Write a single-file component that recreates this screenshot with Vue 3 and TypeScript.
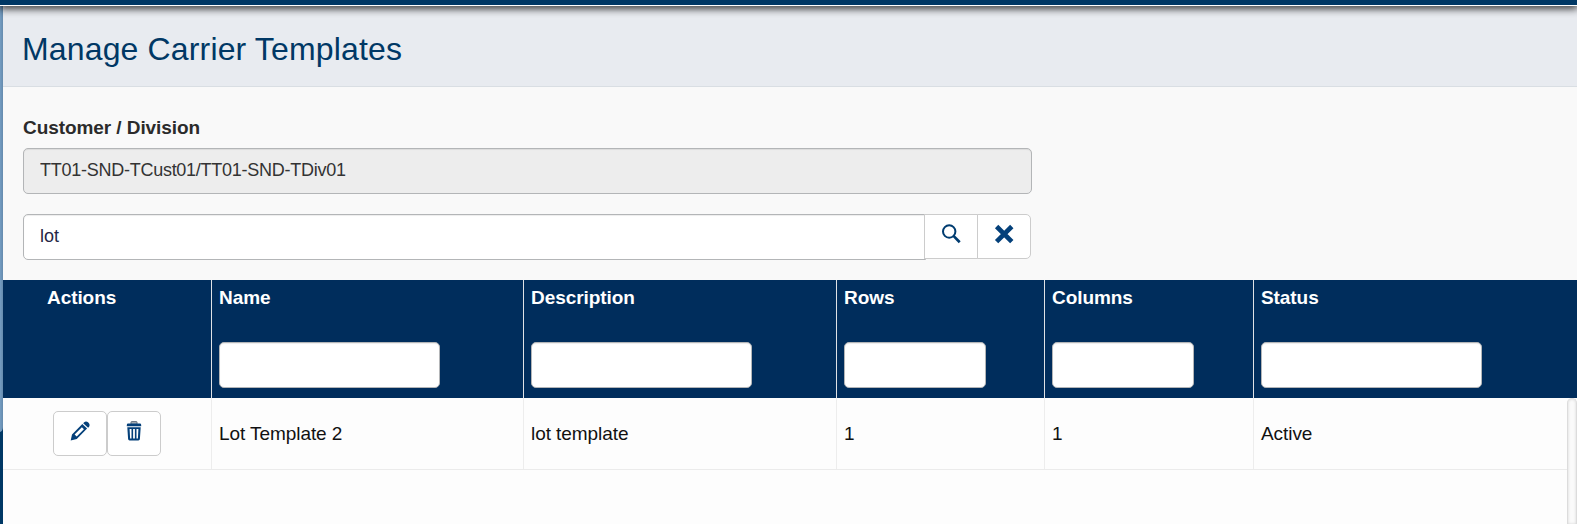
<script setup lang="ts">
import { ref } from 'vue'

interface Column {
  key: 'name' | 'description' | 'rows' | 'columns' | 'status'
  label: string
  narrow?: boolean
}

const columns: Column[] = [
  { key: 'name', label: 'Name' },
  { key: 'description', label: 'Description' },
  { key: 'rows', label: 'Rows', narrow: true },
  { key: 'columns', label: 'Columns', narrow: true },
  { key: 'status', label: 'Status' },
]

const templates = [
  { name: 'Lot Template 2', description: 'lot template', rows: 1, columns: 1, status: 'Active' },
]

const division = ref('TT01-SND-TCust01/TT01-SND-TDiv01')
const search = ref('lot')
</script>

<template>
  <div class="app">
    <div class="topbar"></div>
    <div class="body">
      <div class="rail"><div class="rail-light"></div></div>
      <main class="page">
        <header class="page-header"><h1><span>Manage Carrier Templates</span></h1></header>
        <section class="form">
          <label class="label"><span>Customer / Division</span></label>
          <input v-model="division" class="input division" disabled />
          <div class="search">
            <input v-model="search" class="input search-input" />
            <button class="btn attached" aria-label="Search">
              <svg width="20" height="20" viewBox="0 0 20 20">
                <circle cx="8.2" cy="7.5" r="6.2" fill="none" stroke="#003c70" stroke-width="2" />
                <path d="M12.5 11.9l6.2 6.3" fill="none" stroke="#003c70" stroke-width="2.7" />
              </svg>
            </button>
            <button class="btn attached last" aria-label="Clear">
              <svg width="20" height="20" viewBox="0 0 20 20">
                <path d="M2.6 2.5l15.2 15.2M17.8 2.5L2.6 17.7" stroke="#04407a" stroke-width="4.7" />
              </svg>
            </button>
          </div>
        </section>
        <section class="grid">
          <div class="row head">
            <div class="cell actions-head"><span>Actions</span></div>
            <div v-for="c in columns" :key="c.key" class="cell">
              <span class="head-label">{{ c.label }}</span>
              <input class="input filter" :class="{ narrow: c.narrow }" :aria-label="c.label" />
            </div>
          </div>
          <div class="grid-body">
            <div class="rows">
              <div v-for="t in templates" :key="t.name" class="row data">
                <div class="cell actions">
                  <button class="btn" aria-label="Edit">
                    <svg width="20" height="20" viewBox="0 0 20 20">
                      <path fill="#04407a" fill-rule="evenodd" d="M.7 19.4L2 13.4 12.3 3l4.8 4.6L6.8 18zM4.6 13.4l2.1 2.1L13.9 8.2 11.9 6.2z" />
                      <path fill="#04407a" d="M13.2 2.2l1-1q2-1.4 4.1.4t.8 4.2l-1 .9z" />
                    </svg>
                  </button>
                  <button class="btn" aria-label="Delete">
                    <svg width="20" height="20" viewBox="0 0 20 20">
                      <path d="M7 3V1.1q0-.5.5-.5h5q.5 0 .5.5V3" fill="#a9b0b7" stroke="#65717e" />
                      <path d="M2.8 5.2V4q0-1.4 1.4-1.4h11.6q1.4 0 1.4 1.4v1.2z" fill="#04407a" />
                      <path fill="#04407a" fill-rule="evenodd" d="M3.3 6.3h13.4l-.8 11.7q-.1 1.4-1.5 1.4H5.6q-1.4 0-1.5-1.4zM5.6 8l.5 9.4h1.4V8zm3.5 0v9.4h1.8V8zm3.4 0v9.4h1.4l.5-9.4z" />
                    </svg>
                  </button>
                </div>
                <div v-for="c in columns" :key="c.key" class="cell"><span>{{ t[c.key] }}</span></div>
              </div>
            </div>
            <div class="scrollbar"></div>
          </div>
        </section>
      </main>
    </div>
  </div>
</template>

<style>
html, body { margin: 0; overflow: hidden; }
</style>

<style scoped>
* { box-sizing: border-box; }
.app {
  height: 524px;
  display: flex;
  flex-direction: column;
  overflow: hidden;
  font-family: "Liberation Sans", Arial, sans-serif;
  font-size: 19px;
  letter-spacing: -0.07px;
}
.topbar {
  position: relative;
  z-index: 1;
  flex: none;
  height: 6px;
  background: #003865;
  border-bottom: 1px solid #fff;
  box-shadow: 0 1px 8px 1px rgba(0, 0, 0, 0.95);
}
.body { flex: 1; display: flex; min-height: 0; }
.rail { flex: none; width: 3px; background: #003865; }
.rail-light {
  height: 426px;
  background: linear-gradient(90deg, #759dc2, #658bae);
  border-bottom-right-radius: 3px 5px;
}
.page { flex: 1; min-width: 0; display: flex; flex-direction: column; background: #f9f9f9; }
.page-header {
  flex: none;
  height: 81px;
  padding: 24px 19px 0;
  background: #e8ebf0;
  border-bottom: 1px solid #d9dee3;
}
h1 { margin: 0; font-size: 32px; line-height: 38px; font-weight: 400; color: #003865; letter-spacing: 0.15px; }
.form { flex: none; height: 193px; padding: 29px 20px 0; display: flex; flex-direction: column; }
.label { font-weight: 700; line-height: 24px; color: #2b2b2b; margin-bottom: 8px; }
.input {
  flex: none;
  height: 46px;
  margin: 0;
  padding: 0 16px 2px;
  border: 1px solid #b3b5b7;
  border-radius: 5px;
  background: #fff;
  box-shadow: inset 0 1px 1px rgba(0, 0, 0, 0.075);
  font: 18px "Liberation Sans", Arial, sans-serif;
  letter-spacing: -0.26px;
  color: #333;
  outline: none;
}
.division { width: 1009px; background: #ededed; margin-bottom: 20px; }
.search { display: flex; align-items: flex-start; }
.search-input { width: 903px; border-radius: 5px 0 0 5px; color: #262646; letter-spacing: 0; }
.btn {
  flex: none;
  width: 54px;
  height: 45px;
  padding: 0 0 6px;
  display: flex;
  align-items: center;
  justify-content: center;
  background: #fff;
  border: 1px solid #ccc;
  border-radius: 5px;
}
.btn svg { display: block; }
.attached { position: relative; margin-left: -1px; border-radius: 0; }
.search-input + .attached { margin-left: -2px; }
.last { border-radius: 0 5px 5px 0; }
.grid { flex: 1; min-height: 0; display: flex; flex-direction: column; }
.row { display: grid; grid-template-columns: 209px 312px 313px 208px 209px 1fr; }
.cell { border-right: 1px solid #ededed; padding-left: 7px; min-width: 0; }
.cell:last-child { border-right: 0; }
.head { flex: none; height: 118px; background: #002d5c; color: #fff; font-weight: 700; }
.head .cell { border-color: #dfe2e6; padding: 7px 0 0 7px; line-height: 22px; }
.head .actions-head { padding-left: 44px; }
.head-label { display: block; height: 55px; }
.filter { display: block; width: 221px; }
.narrow { width: 142px; }
.grid-body { flex: 1; display: flex; min-height: 0; background: #fdfdfd; }
.rows { flex: 1; min-width: 0; }
.data { height: 72px; border-bottom: 1px solid #ebebeb; color: #111; }
.data .cell { display: flex; align-items: center; }
.data .actions { align-items: flex-start; padding: 13px 0 0 50px; }
.scrollbar {
  flex: none;
  width: 10px;
  border: 1px solid #dcdcdc;
  border-bottom: 0;
  border-radius: 5px 5px 0 0;
  background: #fafafa;
  box-shadow: inset 0 0 3px rgba(0, 0, 0, 0.15);
}
</style>
